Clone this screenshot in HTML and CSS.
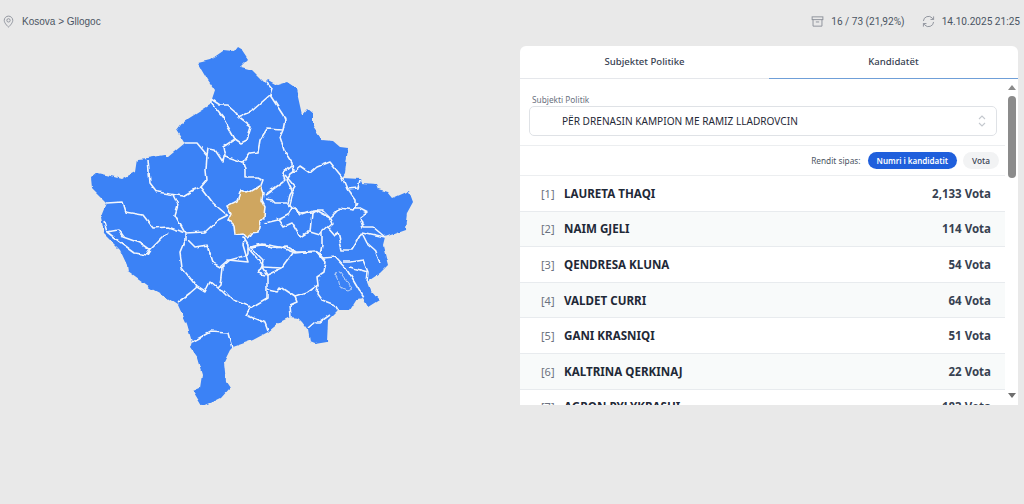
FILE: index.html
```html
<!DOCTYPE html>
<html lang="sq">
<head>
<meta charset="utf-8">
<title>Kosova > Gllogoc</title>
<link rel="stylesheet" href="styles.css">
</head>
<body>
<header class="topbar">
  <div class="crumb">
    <svg class="ico" viewBox="0 0 14 14"><path d="M7 1.2a4.6 4.6 0 0 0-4.6 4.6C2.400 9 7 13 7 13s4.600-4 4.600-7.200A4.600 4.600 0 0 0 7 1.200z"/><circle cx="7" cy="5.800" r="1.800"/></svg>
    <span>Kosova &gt; Gllogoc</span>
  </div>
  <div class="stats">
    <div class="stat">
      <svg class="ico" viewBox="0 0 14 14"><rect x="1.200" y="2" width="11.600" height="3"/><path d="M2.200 5v7h9.600V5M5.200 7.500h3.600"/></svg>
      <span>16 / 73 (21,92%)</span>
    </div>
    <div class="stat">
      <svg class="ico" viewBox="0 0 14 14"><path d="M1.500 6.500A5.500 5.500 0 0 1 11 3.200L12.500 4.800M12.500 1.500v3.300H9.200M12.500 7.500A5.500 5.500 0 0 1 3 10.800L1.500 9.200M1.500 12.500V9.200h3.300"/></svg>
      <span>14.10.2025 21:25</span>
    </div>
  </div>
</header>
<main class="layout">
  <svg class="map" viewBox="0 46 520 359" aria-label="Kosova">
    <defs>
      <filter id="rough" x="0" y="0" width="100%" height="100%" filterUnits="objectBoundingBox">
        <feTurbulence type="fractalNoise" baseFrequency="0.11" numOctaves="2" seed="4" result="noise"/>
        <feDisplacementMap in="SourceGraphic" in2="noise" scale="4" xChannelSelector="R" yChannelSelector="G"/>
        <feGaussianBlur stdDeviation="0.35"/>
      </filter>
    </defs>
    <g class="regions">
    <path class="land" d="M198 63L210 60L223 51L233 52L237 47L242 50L248 59L240 67L252 70L260 78L265 83L268 80L277 85L287 82L296 88L302 115L307 109L313 114L313 127L322 140L333 141L340 147L348 148L345 173L342 178L360 179L362 183L376 184L378 189L388 192L393 198L409 191L413 202L407 213L405 230L385 237L383 245L388 265L380 273L367 282L370 290L379 300L368 307L363 298L357 299L350 310L338 310L328 320L327 342L315 344L310 342L308 330L302 322L298 318L290 317L280 322L268 332L253 340L233 347L230 350L224 362L226 382L230 388L222 397L212 402L202 406L193 391L200 388L202 375L197 358L190 348L192 342L187 325L178 305L163 295L150 288L128 272L127 265L120 250L104 234L101 218L107 203L92 188L91 178L97 173L115 177L122 179L135 172L137 159L147 158L165 155L168 157L185 143L177 130L183 122L210 105L215 90L208 80Z"/>
    <g class="borders">
      <path d="M211 99L220 105L228 105L235 111L238 117L250 112L253 110L270 95L272 88L267 82"/>
      <path d="M270 95L283 115L285 120L283 130L280 137L285 152L292 163L293 170L287 180L293 193L290 205"/>
      <path d="M238 117L251 127L247 140L241 143L235 139L223 118L211 103L211 99"/>
      <path d="M235 139L223 147L225 157L243 163L245 170L245 177L257 177L263 180L260 188"/>
      <path d="M243 163L250 153L258 152L260 140L267 129L283 130"/>
      <path d="M185 143L197 143L207 155L208 149L215 150L223 162L225 153"/>
      <path d="M207 155L206 170L207 180L201 187L193 190L183 196L170 194L157 192L150 183L148 160"/>
      <path d="M201 187L213 203L227 215"/>
      <path d="M173 195L178 205L175 215L185 233L185 240L180 252L182 268L197 287L190 293L177 303"/>
      <path d="M107 203L122 202L125 212L143 215L153 228L168 227L185 233L205 232L218 220L228 215"/>
      <path d="M188 240L195 247L207 245L213 263L222 268L220 285L217 288L210 282L205 292L197 287"/>
      <path d="M168 232L160 240L150 250L147 255L135 253L120 242L107 232L104 222M107 232L118 230L123 237L140 243L150 250"/>
      <path d="M217 288L223 290L233 300L247 305L250 308L246 315L265 323L268 331"/>
      <path d="M222 267L230 260L248 255L248 245L243 237L245 238"/>
      <path d="M250 308L267 298L267 275L262 267L263 260L250 247L263 245L272 248L287 247L295 252L317 252L325 262L323 273L317 277L318 285L317 293L322 300L335 305L338 310"/>
      <path d="M318 285L307 293L295 297L280 287L277 292L268 290"/>
      <path d="M295 297L297 302L290 305L291 317"/>
      <path d="M267 275L282 268L293 253"/>
      <path d="M248 248L262 244L280 247L295 253L315 251L322 255"/>
      <path d="M248 248L263 265L258 273L265 275"/>
      <path d="M192 342L210 332L228 333L232 348"/>
      <path d="M323 258L335 257L347 270L353 280L363 297"/>
      <path d="M343 262L350 262L363 260L368 272L367 282M350 267L353 268L368 272"/>
      <path d="M330 315L320 322L315 322L308 328"/>
      <path d="M265 199L272 200L275 203L288 203L292 208L288 215L278 220L265 223"/>
      <path d="M265 195L283 182L285 180L283 173L292 165"/>
      <path d="M285 175L295 187L290 195L288 203"/>
      <path d="M292 173L300 166L310 173L317 167L330 162L342 177L347 189L355 200L355 208L360 208L368 212L360 218L363 227L373 227L385 237"/>
      <path d="M360 180L358 188L347 189"/>
      <path d="M293 208L300 215L313 210L322 210L330 218L340 208L353 210L357 203"/>
      <path d="M292 208L300 213L312 212L315 210L330 218L332 223L322 232L322 245L320 255L325 260"/>
      <path d="M312 212L310 232L320 235L322 232"/>
      <path d="M277 218L283 227L292 223L300 237L308 232L310 232"/>
      <path d="M328 227L335 235L338 233L342 250L352 250L362 233L367 243L375 250L380 263"/>
      <path d="M362 232L385 237"/>
      <path d="M245 238L243 245L248 262L228 260L220 267"/>
      <path d="M282 268L262 267"/>
    </g>
    <path class="lake" d="M335 273L340 272L347 282L352 288L348 290L340 287L338 278Z"/>
    <path class="gold" d="M241 190L246 193L250 192L260 186L263 193L262 200L265 206L264 218L260 222L258 232L252 233L248 239L243 233L235 234L234 226L228 220L231 214L227 206L237 201Z"/>
    </g>
  </svg>

  <section class="card">
    <nav class="tabs">
      <div class="tab">Subjektet Politike</div>
      <div class="tab active">Kandidatët</div>
    </nav>
    <div class="pane">
      <div class="card-body">
        <div class="filter">
          <div class="filter-label">Subjekti Politik</div>
          <div class="select">
            <span>PËR DRENASIN KAMPION ME RAMIZ LLADROVCIN</span>
            <svg class="updown" viewBox="0 0 10 14"><path d="M2 5L5 2L8 5M2 9L5 12L8 9"/></svg>
          </div>
        </div>
        <div class="sortbar">
          <span class="sort-label">Rendit sipas:</span>
          <span class="pill on">Numri i kandidatit</span>
          <span class="pill">Vota</span>
        </div>
        <ul class="rows">
          <li class="row"><span class="num">[1]</span><span class="name">LAURETA THAQI</span><span class="votes">2,133 Vota</span></li>
          <li class="row"><span class="num">[2]</span><span class="name">NAIM GJELI</span><span class="votes">114 Vota</span></li>
          <li class="row"><span class="num">[3]</span><span class="name">QENDRESA KLUNA</span><span class="votes">54 Vota</span></li>
          <li class="row"><span class="num">[4]</span><span class="name">VALDET CURRI</span><span class="votes">64 Vota</span></li>
          <li class="row"><span class="num">[5]</span><span class="name">GANI KRASNIQI</span><span class="votes">51 Vota</span></li>
          <li class="row"><span class="num">[6]</span><span class="name">KALTRINA QERKINAJ</span><span class="votes">22 Vota</span></li>
          <li class="row"><span class="num">[7]</span><span class="name">AGRON PYLYKRASHI</span><span class="votes">183 Vota</span></li>
        </ul>
      </div>
      <div class="scroll">
        <span class="arrow up"></span>
        <span class="thumb"></span>
        <span class="arrow down"></span>
      </div>
    </div>
  </section>
</main>
</body>
</html>
```

FILE: styles.css
```css
* { box-sizing: border-box; }
html, body { margin: 0; padding: 0; }
body {
  width: 1024px;
  height: 504px;
  overflow: hidden;
  background: #e9e9e9;
  font-family: "Noto Sans", sans-serif;
  color: #1f2937;
}
.topbar {
  height: 46px;
  padding: 0 4px 4px 2px;
  display: flex;
  align-items: center;
  justify-content: space-between;
  font-family: Roboto, sans-serif;
  font-size: 10.1px;
  color: #4b5563;
}
.crumb, .stat, .stats { display: flex; align-items: center; }
.crumb { gap: 7px; font-family: "Liberation Sans", sans-serif; font-size: 10px; }
.stats { gap: 17px; }
.stat { gap: 7px; }
.ico {
  width: 13px;
  height: 13px;
  fill: none;
  stroke: #8b9099;
  stroke-width: 1;
}
.layout { display: flex; height: 359px; }
.map { width: 520px; height: 359px; flex: none; display: block; }
.regions { filter: url(#rough); }
.land { fill: #3b82f6; }
.borders path {
  fill: none;
  stroke: #f2f6fd;
  stroke-width: 1.6;
  stroke-linejoin: round;
}
.lake { fill: #3b82f6; stroke: #b9d0f5; stroke-width: 1; }
.gold { fill: #cfa660; stroke: #f2f6fd; stroke-width: 1.6; }
.card {
  width: 498px;
  height: 359px;
  display: flex;
  flex-direction: column;
  overflow: hidden;
  background: #fff;
  border-radius: 6px 6px 0 0;
}
.tabs { display: flex; flex: none; height: 33px; border-bottom: 1px solid #e5e7eb; }
.tab {
  width: 249px;
  text-align: center;
  font-size: 9.6px;
  line-height: 32px;
  font-weight: 500;
  color: #374151;
}
.tab.active { border-bottom: 1.5px solid #6f9fd8; height: 33px; }
.pane { display: flex; height: 326px; }
.card-body { width: 485px; flex: none; height: 100%; overflow: hidden; }
.filter { padding: 15px 8px 0 9px; border-bottom: 1px solid #eceef0; height: 67px; }
.filter-label { font-size: 8.3px; line-height: 11px; color: #6b7280; margin: 0 0 1px 3px; }
.select {
  height: 30px;
  padding: 0 9px 0 32px;
  display: flex;
  align-items: center;
  justify-content: space-between;
  border: 1px solid #dfe2e6;
  border-radius: 5px;
  font-size: 10.1px;
  color: #1f2937;
}
.updown { width: 10px; height: 14px; fill: none; stroke: #c4c8ce; stroke-width: 1.1; }
.sortbar {
  height: 30px;
  padding-right: 6px;
  display: flex;
  align-items: center;
  justify-content: flex-end;
  border-bottom: 1px solid #eceef0;
  font-size: 8.3px;
}
.sort-label { color: #4b5563; margin-right: 7px; }
.pill {
  height: 17px;
  line-height: 17px;
  padding: 0 9px;
  border-radius: 9px;
  background: #f2f3f4;
  color: #374151;
  font-weight: 500;
}
.pill.on { background: #1f5fdc; color: #fff; font-weight: 600; font-size: 8px; padding: 0 9px; margin-right: 6px; }
.rows { list-style: none; margin: 0; padding: 0; }
.row {
  height: 35.6px;
  padding: 0 14px 0 21px;
  display: flex;
  align-items: center;
  border-bottom: 1px solid #e8ebee;
}
.row:nth-child(even) { background: #f8fafa; }
.num { width: 23px; font-size: 11px; color: #6b7280; }
.name { flex: 1; font-size: 11.6px; font-weight: 700; color: #1f2937; }
.votes { font-size: 11.5px; font-weight: 700; color: #374151; }
.scroll {
  width: 13px;
  flex: none;
  display: flex;
  flex-direction: column;
  align-items: center;
  padding-top: 6px;
  background: #fff;
}
.arrow { width: 0; height: 0; border-left: 4.500px solid transparent; border-right: 4.500px solid transparent; }
.arrow.up { border-bottom: 5px solid #8a8a8a; }
.thumb { width: 8px; height: 82px; margin-top: 6px; border-radius: 4px; background: #8b8b8b; }
.arrow.down { border-top: 5px solid #6e6e6e; margin-top: 215px; }
```
